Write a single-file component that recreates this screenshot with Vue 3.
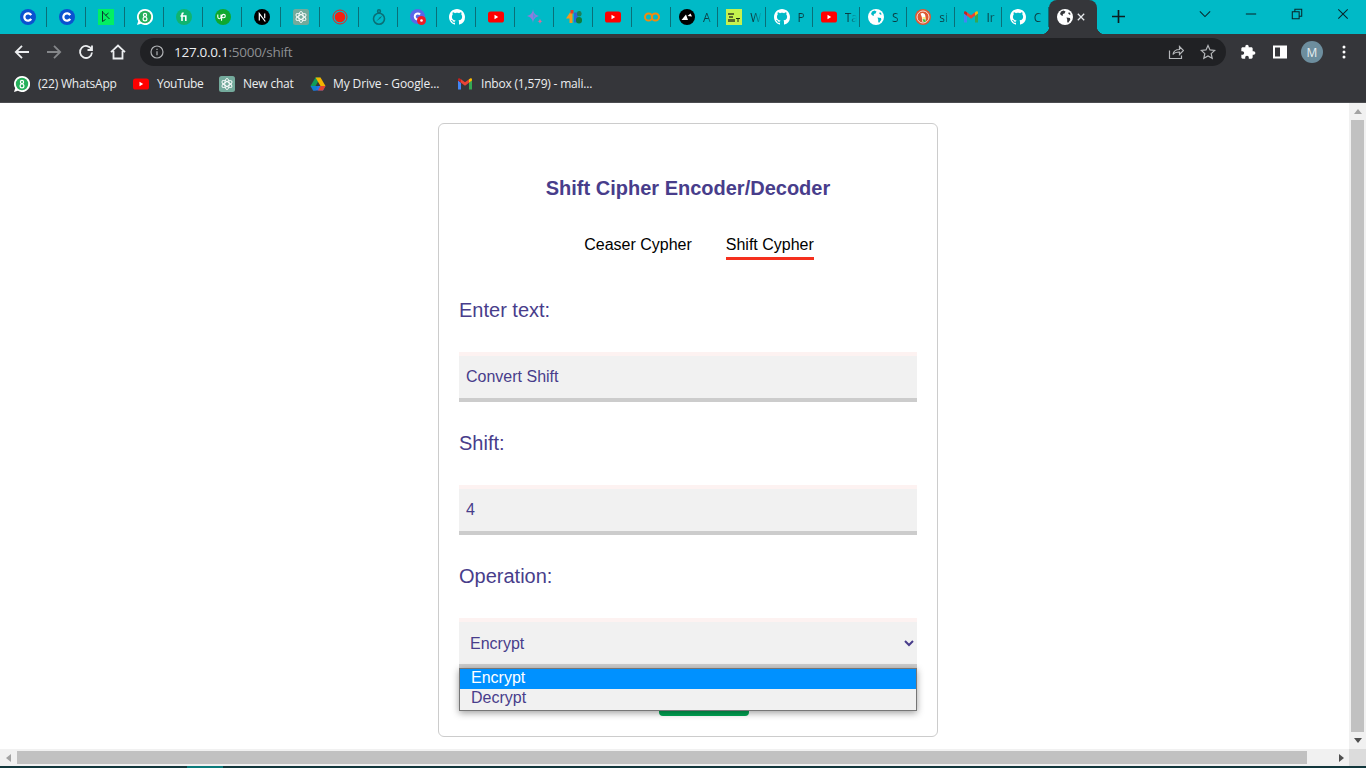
<template>
  <svg class="defs" aria-hidden="true">
    <symbol id="coin" viewBox="0 0 16 16">
      <circle cx="8" cy="8" r="8" fill="#0a52d0" />
      <path d="M11.2 6.1A3.7 3.7 0 1 0 11.2 9.9" fill="none" stroke="#fff" stroke-width="2.2" />
    </symbol>
    <symbol id="dcamp" viewBox="0 0 16 16">
      <rect width="16" height="16" fill="#03ef62" />
      <path d="M4.500 2v10.500l3-2M4.500 3 11.500 10M7.500 6.500l3-2.500" fill="none" stroke="#0b3a30" stroke-width="1" />
    </symbol>
    <symbol id="whats" viewBox="0 0 16 16">
      <path d="M8 0a8 8 0 0 0-6.800 12.200L0 16l3.900-1.200A8 8 0 1 0 8 0z" fill="#fff" />
      <circle cx="8" cy="8" r="6.200" fill="#25b05a" />
      <circle cx="8" cy="5.900" r="1.600" fill="none" stroke="#fff" stroke-width="1.200" />
      <circle cx="8" cy="9.900" r="1.900" fill="none" stroke="#fff" stroke-width="1.200" />
    </symbol>
    <symbol id="fiverr" viewBox="0 0 16 16">
      <circle cx="8" cy="8" r="8" fill="#10b46e" />
      <path d="M6 12V5.600c0-1 .5-1.500 1.600-1.500M4.400 7h5.400v5" fill="none" stroke="#fff" stroke-width="1.600" />
    </symbol>
    <symbol id="upwork" viewBox="0 0 16 16">
      <circle cx="8" cy="8" r="8" fill="#0fa82e" />
      <path d="M2.800 5.500v2.600a1.600 1.600 0 0 0 3.200 0V5.500c.3 2 1 3.300 2.600 3.300a1.700 1.700 0 0 0 0-3.400c-1.300 0-1.700 1-1.800 2.400l-.3 3.900" fill="none" stroke="#fff" stroke-width="1.100" />
    </symbol>
    <symbol id="next" viewBox="0 0 16 16">
      <circle cx="8" cy="8" r="8" fill="#000" />
      <path d="M5.300 11.500V4.600l6 7.900M10.700 4.600v4.600" fill="none" stroke="#fff" stroke-width="1.200" />
    </symbol>
    <symbol id="gpt" viewBox="0 0 16 16">
      <rect width="16" height="16" rx="2.500" fill="#74aa9c" />
      <g fill="none" stroke="#fff" stroke-width=".9">
        <ellipse cx="8" cy="8" rx="2.200" ry="5.600" />
        <ellipse cx="8" cy="8" rx="2.200" ry="5.600" transform="rotate(60 8 8)" />
        <ellipse cx="8" cy="8" rx="2.200" ry="5.600" transform="rotate(120 8 8)" />
      </g>
    </symbol>
    <symbol id="record" viewBox="0 0 16 16">
      <circle cx="8" cy="8" r="7" fill="none" stroke="#f0201a" stroke-width="1" />
      <circle cx="8" cy="8" r="5.300" fill="#f5200f" />
    </symbol>
    <symbol id="pendant" viewBox="0 0 16 16">
      <g fill="none" stroke="#0a6f76" stroke-width="1.600">
        <circle cx="8" cy="2.200" r="1.400" />
        <circle cx="8" cy="9.700" r="5.500" />
      </g>
      <path d="M5 12.500 8.800 8.300 11 6.800 9.800 9z" fill="#0a6f76" />
    </symbol>
    <symbol id="meet" viewBox="0 0 16 16">
      <circle cx="7.500" cy="7.500" r="7.500" fill="#5a67e8" />
      <path d="M10 5.500a3 3 0 1 0 0 4" fill="none" stroke="#fff" stroke-width="2" />
      <circle cx="11.500" cy="11.500" r="4.500" fill="#ee1c25" />
      <circle cx="11.500" cy="11.500" r="1.300" fill="#fff" />
    </symbol>
    <symbol id="github" viewBox="0 0 16 16">
      <path fill="#fff" d="M8 0C3.580 0 0 3.580 0 8c0 3.540 2.290 6.530 5.470 7.590.4.070.55-.17.55-.38 0-.19-.01-.82-.01-1.490-2.010.37-2.530-.49-2.690-.94-.09-.23-.48-.94-.82-1.130-.28-.15-.68-.52-.01-.53.63-.01 1.080.58 1.230.82.72 1.210 1.870.87 2.330.66.07-.52.28-.87.51-1.070-1.780-.2-3.640-.89-3.640-3.950 0-.87.31-1.590.82-2.150-.08-.2-.36-1.020.08-2.120 0 0 .67-.21 2.200.82.64-.18 1.320-.27 2-.27.68 0 1.360.09 2 .27 1.530-1.040 2.200-.82 2.200-.82.44 1.100.16 1.920.08 2.120.51.56.82 1.270.82 2.150 0 3.070-1.870 3.750-3.650 3.950.29.25.54.73.54 1.480 0 1.070-.01 1.930-.01 2.200 0 .21.15.46.55.38A8.013 8.013 0 0 0 16 8c0-4.420-3.580-8-8-8z" />
    </symbol>
    <symbol id="youtube" viewBox="0 0 16 16">
      <rect y="2.500" width="16" height="11" rx="2.600" fill="#f00" />
      <path d="M6.500 5.800v4.400L10.200 8z" fill="#fff" />
    </symbol>
    <symbol id="spark" viewBox="0 0 16 16">
      <path d="M6 0c.5 4 2.200 6 6 7-3.800 1-5.500 3-6 7-.5-4-2.200-6-6-7 3.800-1 5.500-3 6-7z" fill="#8f7bdc" />
      <path d="M6 3c.3 2.200 1.300 3.300 3 4-1.700.7-2.700 1.800-3 4z" fill="#3f9fe0" />
      <path d="M13 9.500c.2 1.700.9 2.400 2.700 2.800-1.800.4-2.500 1.100-2.700 2.900-.2-1.800-.9-2.500-2.700-2.900 1.800-.4 2.500-1.100 2.700-2.800z" fill="#e2689a" />
    </symbol>
    <symbol id="blocks" viewBox="0 0 16 16">
      <path d="M0 9.500 4 3.500h2.500V14H3.500V9.500z" fill="#f59a1b" />
      <rect x="4.500" y="1" width="3" height="3.500" fill="#e23b2e" />
      <path d="M8 3.500h4v10H8z" fill="#2a66d8" />
      <rect x="10" y="8" width="6" height="6.500" rx="3" fill="#0f7c3b" />
      <rect x="11" y="2" width="4.500" height="5.500" rx="2.200" fill="#1c7f5a" />
    </symbol>
    <symbol id="rings" viewBox="0 0 16 16">
      <circle cx="4.600" cy="8" r="3.600" fill="none" stroke="#f28a0e" stroke-width="2" />
      <circle cx="11.400" cy="8" r="3.600" fill="none" stroke="#f28a0e" stroke-width="2" />
    </symbol>
    <symbol id="peaks" viewBox="0 0 16 16">
      <circle cx="8" cy="8" r="8" fill="#000" />
      <path d="M2.500 11 7 5.500 9 11zM8.500 7l3-2.500 1.500 3z" fill="#fff" />
    </symbol>
    <symbol id="lime" viewBox="0 0 16 16">
      <rect width="16" height="16" fill="#c6f24e" />
      <path d="M2 4h6v2H2zM3 7h4v2H3zM2 10h7v3H2z" fill="#5a6b2c" />
      <path d="M10 9h4v1h-1.500v3h-1v-3H10z" fill="#1c2a10" />
    </symbol>
    <symbol id="globe" viewBox="0 0 16 16">
      <circle cx="8" cy="8" r="8" fill="#fff" />
      <path d="M4 2.500 6.500 1.500 8.500 2.500 7.500 4.500 5.800 5 6 6.800 4.500 6.500 3 5zM9.500 8.500l3.500.5.300 1.800L11 14l-.8-1.300V10.500zM12 3l1.800 2.200-1.300.5-1.300-1.300z" fill="currentColor" />
    </symbol>
    <symbol id="duck" viewBox="0 0 16 16">
      <circle cx="8" cy="8" r="8" fill="#de5833" />
      <circle cx="8" cy="8" r="6" fill="none" stroke="#fff" stroke-width=".8" />
      <path d="M5.500 4.500c2-1.200 4.500-.5 4.800 2l.7 6.500H7.500L6.800 8z" fill="#fff" />
      <path d="M7.500 8.500h3.500l-1 1H7.500z" fill="#fdd20a" />
      <path d="M8.500 13l-1-3 3 .5.300 2.500z" fill="#4cba3c" />
    </symbol>
    <symbol id="gmail" viewBox="0 0 16 16">
      <path d="M1 13.500V4.500l3 2.300v6.700z" fill="#4285f4" />
      <path d="M12 13.500V6.800l3-2.300v9z" fill="#34a853" />
      <path d="M4 6.800 8 9.800l4-3V3.300L8 6.300 4 3.300z" fill="#ea4335" />
      <path d="M1 4.500 4 6.800V3.300L2.800 2.500C2 2 1 2.600 1 3.600z" fill="#c5221f" />
      <path d="M15 4.500 12 6.800V3.300l1.200-.8c.8-.5 1.800.1 1.800 1.100z" fill="#fbbc04" />
    </symbol>
    <symbol id="drive" viewBox="0 0 16 16">
      <path d="M5.500 1.500h5l-5 8.500H.5z" fill="#0f9d58" />
      <path d="M5.500 1.500h5l5 8.500h-5z" fill="#f4b400" />
      <path d="M3 14.500l2.500-4.500h10L13 14.500z" fill="#2a71e8" />
      <path d="M.5 10h5L8 10l-2.500 4.500H3z" fill="#0f7fd0" />
      <path d="M10.500 10h5L13 14.500H8z" fill="#e5432f" />
    </symbol>
  </svg>

  <div class="window">
    <header class="tabstrip">
      <div
        v-for="(tab, i) in tabs"
        :key="i"
        class="tab"
        :class="{ wide: tab.title }"
      >
        <svg class="fav"><use :href="'#' + tab.icon" /></svg>
        <span v-if="tab.title" class="tab-title">{{ tab.title }}</span>
      </div>

      <div class="tab-active">
        <svg class="fav"><use href="#globe" /></svg>
        <svg class="tab-close" viewBox="0 0 10 10">
          <path d="M1 1l8 8M9 1l-8 8" />
        </svg>
      </div>

      <svg class="new-tab" viewBox="0 0 14 14"><path d="M7 0v14M0 7h14" /></svg>

      <div class="win-controls">
        <button class="win-btn">
          <svg viewBox="0 0 14 14"><path d="M1 4l6 6 6-6" /></svg>
        </button>
        <button class="win-btn">
          <svg viewBox="0 0 14 14"><path d="M1 7h12" /></svg>
        </button>
        <button class="win-btn">
          <svg viewBox="0 0 14 14"><path d="M1.500 4.500h8v8h-8zM4.500 4.500v-3h8v8h-3" /></svg>
        </button>
        <button class="win-btn">
          <svg viewBox="0 0 14 14"><path d="M1.500 1.500l11 11M12.500 1.500l-11 11" /></svg>
        </button>
      </div>
    </header>

    <div class="toolbar">
      <button class="tool">
        <svg viewBox="0 0 16 16"><path d="M15 8H2M8 1.800 1.800 8 8 14.200" /></svg>
      </button>
      <button class="tool dim">
        <svg viewBox="0 0 16 16"><path d="M1 8h13M8 1.800 14.200 8 8 14.200" /></svg>
      </button>
      <button class="tool">
        <svg viewBox="0 0 16 16"><path d="M13.500 5.500A6 6 0 1 0 14 8.500M14 1.500v4.500H9.500" /></svg>
      </button>
      <button class="tool">
        <svg viewBox="0 0 16 16"><path d="M1 8.200 8 1.500l7 6.700M3.500 7v7.500h9V7" /></svg>
      </button>

      <div class="omnibox">
        <svg class="info" viewBox="0 0 14 14">
          <circle cx="7" cy="7" r="6" />
          <path d="M7 6.200v4M7 3.800v1.200" />
        </svg>
        <span class="url"><b>127.0.0.1</b>:5000/shift</span>
        <button class="tool small">
          <svg viewBox="0 0 16 16"><path d="M1.500 6.500v8h12v-3M5 10.500c.5-3.500 3-5 6.500-5V2.500L15.500 6.500l-4 4V8C8.500 8 6.500 8.500 5 10.500z" /></svg>
        </button>
        <button class="tool small">
          <svg viewBox="0 0 16 16"><path d="M8 1.500l2 4.400 4.700.5-3.500 3.200 1 4.700L8 11.900l-4.200 2.400 1-4.700-3.500-3.200L6 5.900z" /></svg>
        </button>
      </div>

      <button class="tool">
        <svg class="solid" viewBox="0 0 24 24"><path d="M20.500 11H19V7c0-1.100-.9-2-2-2h-4V3.500C13 2.120 11.880 1 10.500 1S8 2.120 8 3.500V5H4c-1.100 0-1.990.9-1.990 2v3.800H3.500c1.490 0 2.700 1.210 2.700 2.700s-1.210 2.700-2.700 2.700H2V20c0 1.100.9 2 2 2h3.800v-1.500c0-1.490 1.210-2.700 2.700-2.700 1.490 0 2.700 1.210 2.700 2.700V22H17c1.100 0 2-.9 2-2v-4h1.500c1.380 0 2.500-1.120 2.500-2.500S21.880 11 20.500 11z" /></svg>
      </button>
      <button class="tool">
        <svg class="solid" viewBox="0 0 16 16"><path fill-rule="evenodd" d="M1 1.500h14v13H1zM3 3.500v9h5v-9z" /></svg>
      </button>
      <button class="tool">
        <span class="avatar">M</span>
      </button>
      <button class="tool">
        <svg class="solid" viewBox="0 0 16 16">
          <circle cx="8" cy="3" r="1.500" />
          <circle cx="8" cy="8" r="1.500" />
          <circle cx="8" cy="13" r="1.500" />
        </svg>
      </button>
    </div>

    <nav class="bookmarks">
      <a
        v-for="mark in bookmarks"
        :key="mark.icon"
        class="bookmark"
        :style="{ width: mark.width + 'px', letterSpacing: mark.spacing + 'px' }"
      >
        <svg class="fav"><use :href="'#' + mark.icon" /></svg>
        {{ mark.title }}
      </a>
    </nav>

    <div class="viewport">
      <main class="content">
        <div class="page">
          <section class="card">
            <h2 class="title">Shift Cipher Encoder/Decoder</h2>

            <div class="cipher-nav">
              <a class="cipher-link">Ceaser Cypher</a>
              <a class="cipher-link active">Shift Cypher</a>
            </div>

            <form class="form" @submit.prevent>
              <label class="field-label first" for="text">Enter text:</label>
              <input id="text" v-model="text" class="field" type="text" />

              <label class="field-label" for="shift">Shift:</label>
              <input id="shift" v-model="shift" class="field" type="text" />

              <label class="field-label" for="operation">Operation:</label>
              <div class="select-wrap">
                <select id="operation" v-model="operation" class="field select">
                  <option>Encrypt</option>
                  <option>Decrypt</option>
                </select>
                <!-- lista desplegada del select -->
                <ul class="dropdown">
                  <li class="selected">Encrypt</li>
                  <li>Decrypt</li>
                </ul>
              </div>

              <button class="submit" type="submit" aria-label="Submit"></button>
            </form>
          </section>
        </div>
      </main>

      <aside class="vscroll">
        <svg class="arrow" viewBox="0 0 8 5"><path d="M4 0l4 5H0z" fill="#a3a3a3" /></svg>
        <div class="vthumb"></div>
        <svg class="arrow" viewBox="0 0 8 5"><path d="M0 0h8L4 5z" fill="#505050" /></svg>
      </aside>
    </div>

    <div class="hscroll">
      <svg class="arrow-h" viewBox="0 0 5 8"><path d="M5 0v8L0 4z" fill="#a3a3a3" /></svg>
      <div class="hthumb"></div>
      <svg class="arrow-h right" viewBox="0 0 5 8"><path d="M0 0l5 4-5 4z" fill="#505050" /></svg>
      <div class="corner"></div>
    </div>

    <div class="taskbar">
      <div class="task-active"></div>
    </div>
  </div>
</template>

<script setup>
import { ref } from 'vue'

const text = ref('Convert Shift')
const shift = ref('4')
const operation = ref('Encrypt')

const tabs = [
  { icon: 'coin' },
  { icon: 'coin' },
  { icon: 'dcamp' },
  { icon: 'whats' },
  { icon: 'fiverr' },
  { icon: 'upwork' },
  { icon: 'next' },
  { icon: 'gpt' },
  { icon: 'record' },
  { icon: 'pendant' },
  { icon: 'meet' },
  { icon: 'github' },
  { icon: 'youtube' },
  { icon: 'spark' },
  { icon: 'blocks' },
  { icon: 'youtube' },
  { icon: 'rings' },
  { icon: 'peaks', title: 'A' },
  { icon: 'lime', title: 'W' },
  { icon: 'github', title: 'P' },
  { icon: 'youtube', title: 'Ta' },
  { icon: 'globe', title: 'S' },
  { icon: 'duck', title: 'si' },
  { icon: 'gmail', title: 'Ir' },
  { icon: 'github', title: 'C' },
]

const bookmarks = [
  { icon: 'whats', title: '(22) WhatsApp', width: 119, spacing: -0.2 },
  { icon: 'youtube', title: 'YouTube', width: 86, spacing: -0.45 },
  { icon: 'gpt', title: 'New chat', width: 91, spacing: -0.2 },
  { icon: 'drive', title: 'My Drive - Google...', width: 147, spacing: -0.1 },
  { icon: 'gmail', title: 'Inbox (1,579) - mali...', width: 150, spacing: -0.2 },
]
</script>

<style>
html,
body {
  height: 100%;
  overflow: hidden;
}
</style>

<style scoped>
.defs {
  display: none;
}

.window {
  display: flex;
  flex-direction: column;
  height: 768px;
  font-family: "Liberation Sans", Arial, sans-serif;
}

button {
  border: none;
  background: none;
  padding: 0;
}

/* barra de pestañas */
.tabstrip {
  display: flex;
  flex: none;
  align-items: flex-start;
  height: 34px;
  padding-left: 8px;
  background: #00bac7;
}

.fav {
  flex: none;
  width: 16px;
  height: 16px;
}

.tab {
  position: relative;
  display: flex;
  flex: none;
  align-items: center;
  justify-content: center;
  width: 39px;
  height: 34px;
  padding-left: 1px;
  box-sizing: border-box;
  color: #00bac7;
}

.tab::after {
  content: "";
  position: absolute;
  top: 7px;
  right: 0;
  width: 1px;
  height: 20px;
  background: #0a6f78;
}

.tab.wide {
  justify-content: flex-start;
  gap: 8px;
  width: 47.25px;
  padding-left: 8px;
}

.tab-title {
  overflow: hidden;
  width: 12px;
  font-family: "Open Sans", sans-serif;
  font-size: 12px;
  color: #0c3b40;
  white-space: nowrap;
  -webkit-mask-image: linear-gradient(to right, #000 30%, transparent);
  mask-image: linear-gradient(to right, #000 30%, transparent);
}

.tab-active {
  position: relative;
  display: flex;
  flex: none;
  align-items: center;
  gap: 4px;
  width: 48px;
  height: 34px;
  padding-left: 8px;
  box-sizing: border-box;
  border-radius: 8px 8px 0 0;
  color: #35363a;
  background: #35363a;
}

.tab-active::before,
.tab-active::after {
  content: "";
  position: absolute;
  bottom: 0;
  width: 8px;
  height: 8px;
}

.tab-active::before {
  left: -8px;
  background: radial-gradient(circle at 0 0, transparent 8px, #35363a 8.5px);
}

.tab-active::after {
  right: -8px;
  background: radial-gradient(circle at 100% 0, transparent 8px, #35363a 8.5px);
}

.tab-close {
  width: 8px;
  height: 8px;
  fill: none;
  stroke: #e8eaed;
  stroke-width: 1.6;
}

.new-tab {
  flex: none;
  width: 13px;
  height: 13px;
  margin: 10px 0 0 15px;
  fill: none;
  stroke: #0c1d20;
  stroke-width: 1.8;
}

.win-controls {
  display: flex;
  margin-left: auto;
}

.win-btn {
  display: flex;
  align-items: center;
  justify-content: center;
  width: 46px;
  height: 28px;
}

.win-btn svg {
  width: 12px;
  height: 12px;
  fill: none;
  stroke: #08262a;
  stroke-width: 1.2;
}

/* barra de herramientas */
.toolbar {
  display: flex;
  flex: none;
  align-items: flex-end;
  height: 32px;
  padding: 0 6px;
  background: #35363a;
}

.tool {
  display: flex;
  flex: none;
  align-items: center;
  justify-content: center;
  width: 32px;
  height: 28px;
}

.tool svg {
  width: 16px;
  height: 16px;
  fill: none;
  stroke: #eceef0;
  stroke-width: 1.8;
}

.tool svg.solid {
  fill: #fff;
  stroke: none;
}

.tool.dim svg {
  stroke: #85878a;
}

.tool.small svg {
  stroke: #b5b7ba;
  stroke-width: 1.2;
}

.omnibox {
  display: flex;
  flex: 1;
  align-items: center;
  height: 28px;
  margin: 0 6px;
  padding-right: 2px;
  border-radius: 14px;
  background: #202124;
}

.info {
  flex: none;
  width: 14px;
  height: 14px;
  margin-left: 10px;
  fill: none;
  stroke: #b0b2b5;
  stroke-width: 1.2;
}

.url {
  flex: 1;
  margin-left: 10px;
  font-family: "Open Sans", sans-serif;
  font-size: 13.5px;
  letter-spacing: -0.27px;
  color: #8d8f93;
}

.url b {
  font-weight: 400;
  color: #eceef0;
}

.avatar {
  display: flex;
  align-items: center;
  justify-content: center;
  width: 22px;
  height: 22px;
  border-radius: 50%;
  font-family: "Open Sans", sans-serif;
  font-size: 12px;
  color: #e6edf0;
  background: #6d8e9e;
}

/* marcadores */
.bookmarks {
  display: flex;
  flex: none;
  align-items: center;
  height: 36px;
  padding-left: 14px;
  border-bottom: 1px solid #4b4c50;
  background: #35363a;
}

.bookmark {
  display: flex;
  flex: none;
  align-items: center;
  gap: 8px;
  font-family: "Open Sans", sans-serif;
  font-size: 12px;
  line-height: 16px;
  padding-bottom: 1px;
  color: #eceef0;
  white-space: nowrap;
}

.bookmark:nth-child(4) {
  gap: 7px;
}

/* pagina */
.viewport {
  display: flex;
  flex: 1;
  min-height: 0;
}

.content {
  flex: 1;
  overflow: hidden;
  background: #fff;
}

.page {
  width: 1376px;
}

.card {
  box-sizing: border-box;
  width: 500px;
  height: 614px;
  margin: 20px auto 0;
  padding: 53px 20px 20px;
  border: 1px solid #ccc;
  border-radius: 6px;
}

.title {
  margin: 0;
  font-size: 20px;
  line-height: 23px;
  font-weight: 700;
  text-align: center;
  color: #483d8b;
}

.cipher-nav {
  display: flex;
  justify-content: center;
  gap: 34px;
  margin-top: 36px;
  padding-left: 22px;
}

.cipher-link {
  padding-bottom: 3px;
  border-bottom: 3px solid transparent;
  font-size: 16px;
  line-height: 18px;
  color: #000;
}

.cipher-link.active {
  border-bottom-color: #f5301e;
}

.form {
  display: flex;
  flex-direction: column;
}

.field-label {
  margin: 30px 0;
  font-size: 20px;
  line-height: 23px;
  color: #483d8b;
}

.field-label.first {
  margin-top: 39px;
}

.field {
  box-sizing: border-box;
  width: 458px;
  height: 50px;
  padding: 0 7px;
  border: none;
  border-top: 4px solid #fdf2f1;
  border-bottom: 4px solid #ccc;
  border-radius: 0;
  outline: none;
  font-family: "Liberation Sans", Arial, sans-serif;
  font-size: 16px;
  color: #483d8b;
  background: #f1f1f1;
}

.select-wrap {
  position: relative;
}

.dropdown {
  position: absolute;
  top: 50px;
  left: 0;
  z-index: 2;
  box-sizing: border-box;
  width: 458px;
  height: 43px;
  margin: 0;
  padding: 0;
  border: 1px solid #767676;
  list-style: none;
  font-size: 16px;
  line-height: 18px;
  color: #483d8b;
  background: #f1f1f1;
  box-shadow: 0 2px 7px rgba(0, 0, 0, 0.38);
}

.dropdown li {
  height: 20px;
  padding-left: 11px;
}

.dropdown li + li {
  height: 21px;
}

.dropdown .selected {
  color: #fff;
  background: #0091ff;
}

.submit {
  width: 90px;
  height: 40px;
  margin: 8px 0 0 200px;
  border-radius: 4px;
  background: #00a654;
}

/* barras de scroll */
.vscroll {
  display: flex;
  flex: none;
  flex-direction: column;
  align-items: center;
  width: 17px;
  background: #f1f1f1;
}

.arrow {
  flex: none;
  width: 8px;
  height: 5px;
  margin: 6px 0;
}

.vthumb {
  flex: 1;
  width: 13px;
  background: #c1c1c1;
}

.hscroll {
  display: flex;
  flex: none;
  align-items: center;
  height: 17px;
  background: #f1f1f1;
}

.arrow-h {
  flex: none;
  width: 5px;
  height: 8px;
  margin-left: 6px;
}

.hthumb {
  flex: none;
  width: 1290px;
  height: 13px;
  margin-left: 6px;
  background: #c1c1c1;
}

.arrow-h.right {
  margin-left: 32px;
}

.corner {
  flex: none;
  align-self: stretch;
  width: 17px;
  margin-left: auto;
  background: #dcdcdc;
}

.taskbar {
  flex: none;
  height: 2px;
  padding-left: 187px;
  background: #12373c;
}

.task-active {
  width: 36px;
  height: 2px;
  background: #0a7a7a;
}
</style>
